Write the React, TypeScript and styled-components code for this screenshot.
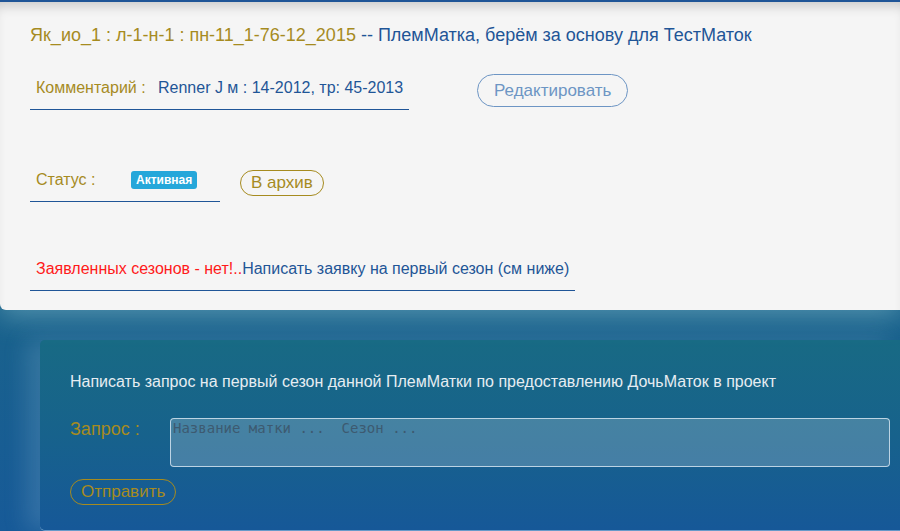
import React from "react";
import styled, { createGlobalStyle } from "styled-components";

const Global = createGlobalStyle`
  html, body { margin: 0; padding: 0; }
  body {
    font-family: "Liberation Sans", Arial, sans-serif;
    background: linear-gradient(180deg, #1b6c86 0%, #1a6489 50%, #175a98 100%);
    min-height: 531px;
    overflow: hidden;
  }
`;

const Page = styled.div`
  min-height: 531px;
  display: flex;
  flex-direction: column;
  background: linear-gradient(180deg, #1b6c86 0%, #1a6489 50%, #175a98 100%);
`;

const Card = styled.section`
  position: relative;
  z-index: 2;
  height: 310px;
  box-sizing: border-box;
  background: #f5f5f5;
  border-top: 2px solid #1f5597;
  border-bottom-left-radius: 6px;
  box-shadow: inset 0 10px 12px -6px rgba(0, 0, 0, 0.18), 0 6px 28px rgba(170, 220, 225, 0.4);
  padding: 22px 0 0 30px;
  display: flex;
  flex-direction: column;
`;

const Title = styled.h1`
  margin: 0;
  font-size: 18px;
  font-weight: normal;
  line-height: 22px;
  white-space: nowrap;
`;

const Gold = styled.span`
  color: #a68b1f;
`;

const Blue = styled.span`
  color: #1f5597;
`;

const Red = styled.span`
  color: #ff1a1a;
`;

const Row = styled.div<{ $top: number; $gap: number }>`
  display: flex;
  align-items: flex-start;
  gap: ${(p) => p.$gap}px;
  margin-top: ${(p) => p.$top}px;
`;

const Field = styled.div<{ $w: number }>`
  width: ${(p) => p.$w}px;
  flex: none;
  box-sizing: border-box;
  padding: 0 6px 10px;
  border-bottom: 1px solid #1f5597;
  font-size: 16px;
  line-height: 22px;
  white-space: nowrap;
`;

const Label = styled.span<{ $w?: number }>`
  color: #a68b1f;
  display: inline-block;
  ${(p) => (p.$w ? `width: ${p.$w}px;` : "")}
`;

const Badge = styled.span`
  display: inline-block;
  vertical-align: top;
  background: #25a7da;
  color: #fff;
  font-size: 12px;
  font-weight: bold;
  line-height: 18px;
  padding: 0 5px;
  border-radius: 3px;
  margin-top: 2px;
`;

const PillButton = styled.button<{ $c: string; $h: number; $px: number; $top?: number }>`
  font-family: "Liberation Sans", Arial, sans-serif;
  font-size: 17px;
  color: ${(p) => p.$c};
  border: 1px solid ${(p) => p.$c};
  background: transparent;
  border-radius: 999px;
  height: ${(p) => p.$h}px;
  padding: 0 ${(p) => p.$px}px;
  margin-top: ${(p) => p.$top ?? 0}px;
  box-sizing: border-box;
  white-space: nowrap;
  flex: none;
  cursor: pointer;
`;

const Panel = styled.section`
  margin: 30px 0 0 40px;
  height: 190px;
  box-sizing: border-box;
  border-radius: 5px 0 0 5px;
  background: linear-gradient(180deg, #186a84 0%, #17628c 50%, #165898 100%);
  box-shadow: -14px 0 22px rgba(150, 190, 220, 0.22), 0 1px 0 rgba(150, 190, 230, 0.6);
  padding: 31px 10px 0 30px;
  display: flex;
  flex-direction: column;
`;

const Intro = styled.p`
  margin: 0;
  color: #e6edf2;
  font-size: 16px;
  line-height: 22px;
`;

const QueryRow = styled.div`
  display: flex;
  align-items: flex-start;
  margin-top: 25px;
`;

const QueryLabel = styled.label`
  width: 100px;
  flex: none;
  color: #a68b1f;
  font-size: 18px;
  line-height: 22px;
`;

const TextArea = styled.textarea`
  flex: 1;
  height: 49px;
  box-sizing: border-box;
  resize: none;
  background: rgba(255, 255, 255, 0.2);
  border: 1px solid rgba(230, 240, 250, 0.75);
  border-radius: 4px;
  padding: 1px 2px;
  font-family: "DejaVu Sans Mono", monospace;
  font-size: 14px;
  color: #fff;
  &::placeholder {
    color: #3d5a70;
  }
`;

const SendRow = styled.div`
  margin-top: 12px;
`;

export default function App() {
  return (
    <Page>
      <Global />
      <Card>
        <Title>
          <Gold>Як_ио_1 : л-1-н-1 : пн-11_1-76-12_2015</Gold>
          <Blue> -- ПлемМатка, берём за основу для ТестМаток</Blue>
        </Title>
        <Row $top={31} $gap={68}>
          <Field $w={379}>
            <Label $w={122}>Комментарий :</Label>
            <Blue>Renner J м : 14-2012, тр: 45-2013</Blue>
          </Field>
          <PillButton $c="#6d95c4" $h={33} $px={16} $top={-3}>
            Редактировать
          </PillButton>
        </Row>
        <Row $top={59} $gap={20}>
          <Field $w={190}>
            <Label $w={95}>Статус :</Label>
            <Badge>Активная</Badge>
          </Field>
          <PillButton $c="#a68b1f" $h={26} $px={10} $top={1}>
            В архив
          </PillButton>
        </Row>
        <Row $top={56} $gap={0}>
          <Field $w={545}>
            <Red>Заявленных сезонов - нет!..</Red>
            <Blue>Написать заявку на первый сезон (см ниже)</Blue>
          </Field>
        </Row>
      </Card>
      <Panel>
        <Intro>
          Написать запрос на первый сезон данной ПлемМатки по предоставлению ДочьМаток в проект
        </Intro>
        <QueryRow>
          <QueryLabel>Запрос :</QueryLabel>
          <TextArea placeholder="Название матки ...  Сезон ..." />
        </QueryRow>
        <SendRow>
          <PillButton $c="#a68b1f" $h={26} $px={10}>
            Отправить
          </PillButton>
        </SendRow>
      </Panel>
    </Page>
  );
}
